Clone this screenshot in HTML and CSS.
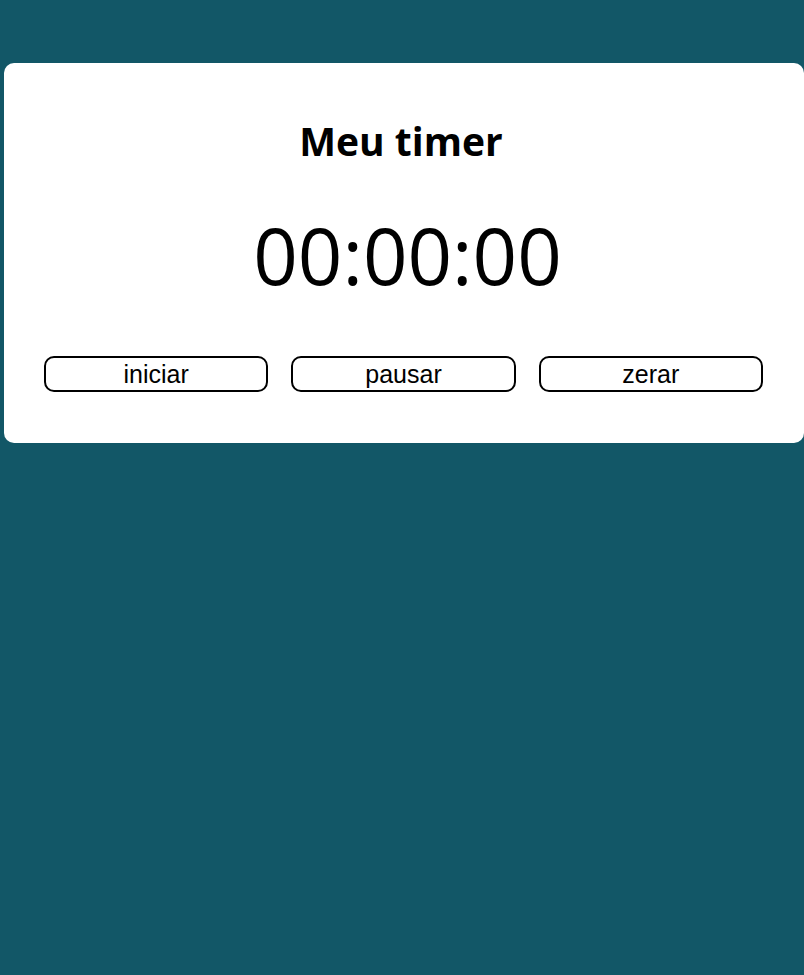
FILE: index.html
```html
<!DOCTYPE html>
<html lang="pt-BR">
<head>
<meta charset="utf-8">
<title>Meu timer</title>
<link rel="stylesheet" href="styles.css">
</head>
<body>
<main class="card">
  <h1 class="title">Meu timer</h1>
  <div class="time">00:00:00</div>
  <div class="actions">
    <button class="btn">iniciar</button>
    <button class="btn">pausar</button>
    <button class="btn">zerar</button>
  </div>
</main>
</body>
</html>
```
FILE: styles.css
```css
html, body {
  margin: 0;
  padding: 0;
}
body {
  background: #125767;
  min-height: 975px;
  padding-top: 63px;
  box-sizing: border-box;
  font-family: "Open Sans", sans-serif;
}
.card {
  margin-left: 4px;
  width: 800px;
  height: 380px;
  box-sizing: border-box;
  background: #ffffff;
  border-radius: 10px;
  padding: 0 41px 0 40px;
  display: flex;
  flex-direction: column;
  align-items: center;
}
.title {
  margin: 52px 5px 0 0;
  font-size: 39px;
  font-weight: 700;
  line-height: 52px;
  color: #000;
}
.time {
  margin: 33px 0 0 8px;
  font-size: 78px;
  line-height: 110px;
  color: #000;
}
.actions {
  margin-top: 46px;
  width: 100%;
  display: grid;
  grid-template-columns: repeat(3, 1fr);
  gap: 23px;
}
.btn {
  height: 36px;
  background: #fff;
  border: 2px solid #000;
  border-radius: 10px;
  font-family: "Liberation Sans", Arial, sans-serif;
  font-size: 25px;
  color: #000;
  padding: 0;
  line-height: 30px;
}
```
